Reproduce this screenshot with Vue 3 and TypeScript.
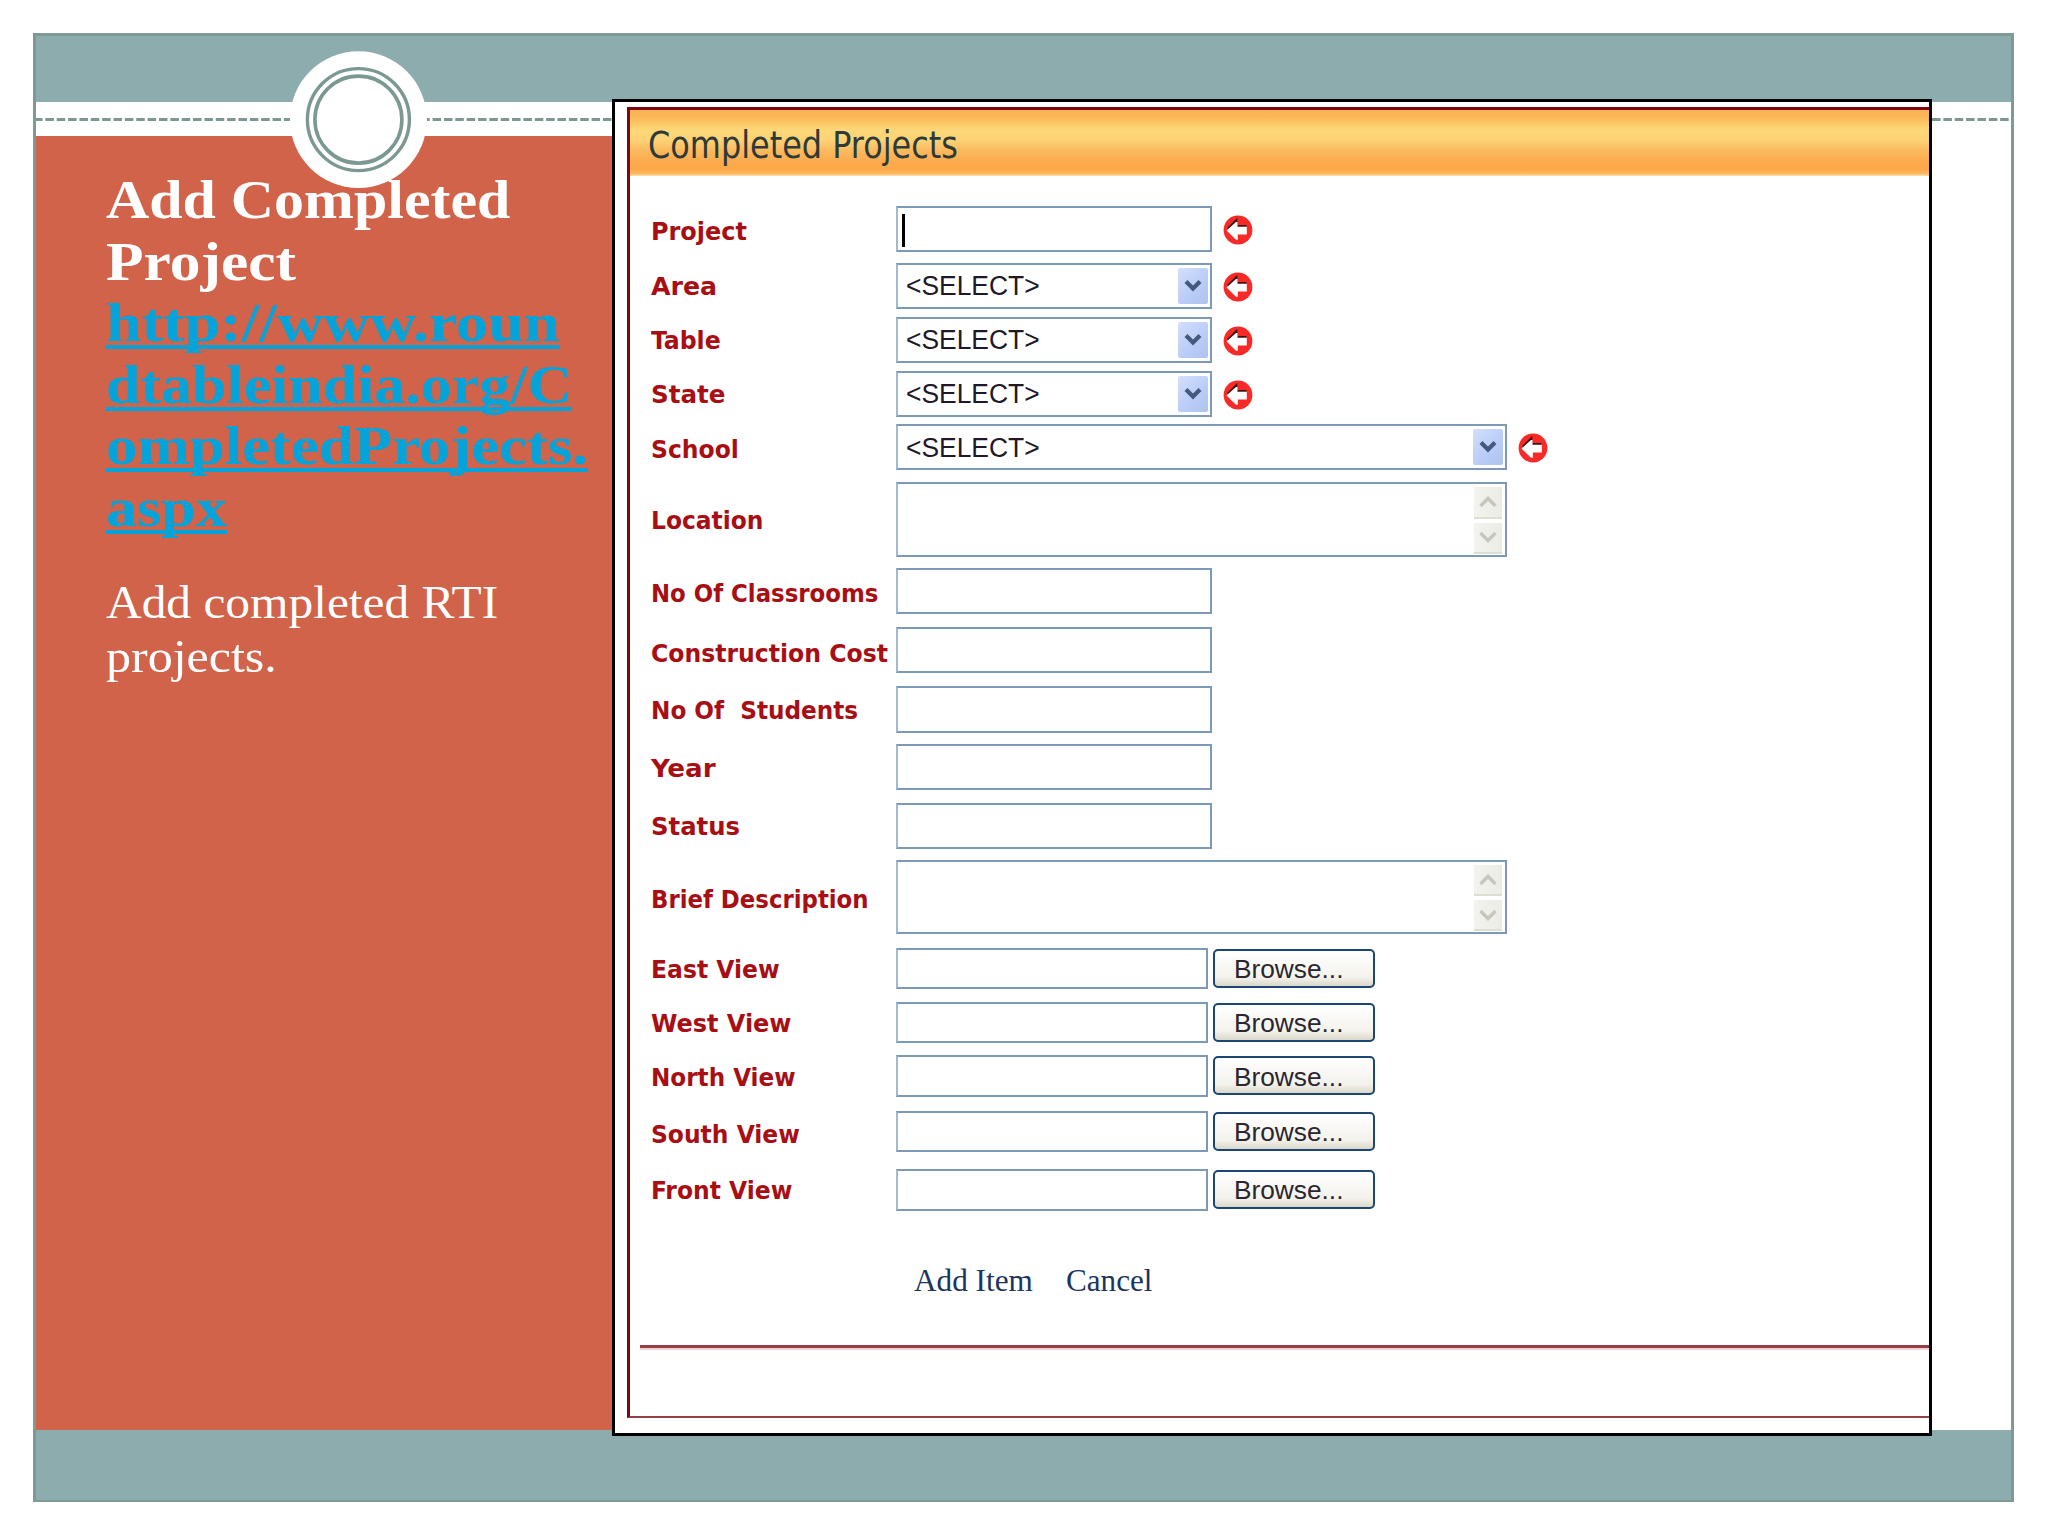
<script setup lang="ts">
import type { Directive } from 'vue'

type Kind = 'text' | 'select' | 'area' | 'file'

interface Field {
  label: string
  kind: Kind
  /** top edge and height of the control, in slide pixels */
  top: number
  height: number
  /** text baselines of the label and of the control's own text */
  base: number
  textBase?: number
  labelWidth: number
  wide?: boolean
  required?: boolean
  focused?: boolean
}

const FIRST_TOP = 176

const fields: Field[] = [
  { label: 'Project', kind: 'text', top: 206, height: 46, base: 241, labelWidth: 96, required: true, focused: true },
  { label: 'Area', kind: 'select', top: 263, height: 46, base: 296, textBase: 296, labelWidth: 66, required: true },
  { label: 'Table', kind: 'select', top: 317, height: 46, base: 350, textBase: 350, labelWidth: 70, required: true },
  { label: 'State', kind: 'select', top: 371, height: 46, base: 404, textBase: 404, labelWidth: 75, required: true },
  { label: 'School', kind: 'select', top: 424, height: 46, base: 459, textBase: 458, labelWidth: 88, wide: true, required: true },
  { label: 'Location', kind: 'area', top: 482, height: 75, base: 530, labelWidth: 112, wide: true },
  { label: 'No Of Classrooms', kind: 'text', top: 568, height: 46, base: 603, labelWidth: 227 },
  { label: 'Construction Cost', kind: 'text', top: 627, height: 46, base: 663, labelWidth: 237 },
  { label: 'No Of  Students', kind: 'text', top: 686, height: 47, base: 720, labelWidth: 207 },
  { label: 'Year', kind: 'text', top: 744, height: 46, base: 778, labelWidth: 65 },
  { label: 'Status', kind: 'text', top: 803, height: 46, base: 836, labelWidth: 89 },
  { label: 'Brief Description', kind: 'area', top: 860, height: 74, base: 909, labelWidth: 218, wide: true },
  { label: 'East View', kind: 'file', top: 948, height: 41, base: 979, textBase: 979, labelWidth: 129 },
  { label: 'West View', kind: 'file', top: 1002, height: 41, base: 1033, textBase: 1033, labelWidth: 141 },
  { label: 'North View', kind: 'file', top: 1055, height: 42, base: 1087, textBase: 1087, labelWidth: 145 },
  { label: 'South View', kind: 'file', top: 1111, height: 41, base: 1144, textBase: 1142, labelWidth: 149 },
  { label: 'Front View', kind: 'file', top: 1169, height: 42, base: 1200, textBase: 1200, labelWidth: 141 },
]

const gapBefore = (i: number): number =>
  i === 0 ? fields[0].top - FIRST_TOP : fields[i].top - fields[i - 1].top - fields[i - 1].height

/** Stretches a line of text horizontally to the given width. */
const vFit: Directive<HTMLElement, number> = {
  mounted(el, { value }) {
    el.style.transform = `scaleX(${value / el.offsetWidth})`
  },
}

const linkLines: [string, number][] = [
  ['http://www.roun', 454],
  ['dtableindia.org/C', 466],
  ['ompletedProjects.', 482],
  ['aspx', 121],
]
</script>

<template>
  <main class="slide">
    <div class="bar bar-top"></div>
    <div class="band"><i class="dashes left"></i><i class="dashes right"></i></div>
    <div class="content">
      <aside class="sidebar">
        <h1>
          <span class="line"><span v-fit="404" class="fit">Add Completed</span></span>
          <span class="line"><span v-fit="190" class="fit">Project</span></span>
          <a class="link">
            <span v-for="[t, w] in linkLines" :key="t" class="line"><span v-fit="w" class="fit">{{ t }}</span></span>
          </a>
        </h1>
        <p>
          <span class="line"><span v-fit="392" class="fit">Add completed RTI</span></span>
          <span class="line"><span v-fit="171" class="fit">projects.</span></span>
        </p>
      </aside>
    </div>
    <div class="bar bar-bottom"></div>

    <svg class="medallion" width="138" height="138" viewBox="0 0 138 138">
      <circle cx="69.4" cy="68.6" r="68.4" fill="#fff" />
      <circle cx="69.4" cy="68.6" r="51" fill="none" stroke="#7b9892" stroke-width="3.4" />
      <circle cx="69.4" cy="68.6" r="43.5" fill="none" stroke="#7b9892" stroke-width="3.6" />
    </svg>

    <section class="shot">
      <div class="page">
        <header><span v-fit="310" class="fit">Completed Projects</span></header>
        <form>
          <div
            v-for="(f, i) in fields"
            :key="f.label"
            class="row"
            :style="{ marginTop: gapBefore(i) + 'px', height: f.height + 'px' }"
          >
            <div class="label">
              <span v-fit="f.labelWidth" class="fit" :style="{ marginTop: f.base - f.top - 25 + 'px' }">{{ f.label }}</span>
            </div>
            <div class="control" :class="[f.kind, { wide: f.wide }]">
              <i v-if="f.focused" class="caret"></i>
              <template v-if="f.kind === 'select'">
                <span v-fit="134" class="fit value" :style="{ marginTop: (f.textBase ?? 0) - f.top - 27 + 'px' }">&lt;SELECT&gt;</span>
                <span class="drop">
                  <svg width="18" height="14" viewBox="0 0 18 14"><path d="M2 2.5 L9 9.5 L16 2.5" fill="none" stroke="#45597d" stroke-width="4.2" /></svg>
                </span>
              </template>
              <span v-if="f.kind === 'area'" class="scroller">
                <span><svg width="18" height="14" viewBox="0 0 18 14"><path d="M1.5 11 L9 3.5 L16.5 11" fill="none" stroke="#c6c6bf" stroke-width="3.4" /></svg></span>
                <span><svg width="18" height="14" viewBox="0 0 18 14"><path d="M1.5 3 L9 10.5 L16.5 3" fill="none" stroke="#c6c6bf" stroke-width="3.4" /></svg></span>
              </span>
            </div>
            <button v-if="f.kind === 'file'" type="button" class="browse">
              <span v-fit="109" class="fit" :style="{ marginTop: (f.textBase ?? 0) - f.top - 28 + 'px' }">Browse...</span>
            </button>
            <svg v-if="f.required" class="required" width="30" height="30" viewBox="0 0 30 30">
              <circle cx="15" cy="15" r="14.4" fill="#f82a27" />
              <path d="M5 14 L13 6 V11.2 H23.5" fill="none" stroke="#3a1512" stroke-width="2.6" />
              <path d="M3.5 15.5 L13 7 H14.5 V11.8 H23.8 V19.5 H14.8 V24.8 H13 Z" fill="#fff" />
            </svg>
          </div>
        </form>
        <nav>
          <a><span v-fit="119" class="fit">Add Item</span></a>
          <a><span v-fit="86" class="fit">Cancel</span></a>
        </nav>
        <div class="rule"></div>
      </div>
    </section>
  </main>
</template>

<style>
body {
  background: #fff;
}
</style>

<style scoped>
.slide {
  position: relative;
  box-sizing: border-box;
  width: 1981px;
  height: 1469px;
  margin: 33px 0 0 33px;
  border: 3px solid #7e9a95;
  border-bottom-width: 2px;
  background: #fff;
  display: flex;
  flex-direction: column;
}
.bar {
  background: #8cacae;
}
.bar-top {
  height: 66px;
}
.bar-bottom {
  height: 70px;
}
.band {
  height: 34px;
  display: flex;
  align-items: center;
}
.dashes {
  height: 3px;
  background: linear-gradient(90deg, #7b9892 0 8.2px, transparent 8.2px) 0 0 / 11.374px 3px repeat-x;
}
.dashes.left {
  width: 254px;
  background-position-x: -2px;
}
.dashes.right {
  margin-left: 137px;
  flex: 1;
  background-position-x: -5.8px;
}
.content {
  flex: 1;
  display: flex;
}
.sidebar {
  width: 577px;
  box-sizing: border-box;
  padding: 33px 0 0 70px;
  background: #d06349;
  color: #fff;
  font-family: "Liberation Serif", serif;
}
.fit {
  display: inline-block;
  white-space: pre;
  transform-origin: 0 50%;
}
.line {
  display: block;
}
h1 {
  margin: 0;
  font-size: 55px;
  line-height: 61.6px;
  font-weight: bold;
}
h1 .line {
  height: 61.6px;
}
.link {
  color: #04a3da;
}
.link .fit {
  text-decoration: underline;
  text-decoration-thickness: 3.5px;
  text-underline-offset: 4px;
  text-decoration-skip-ink: none;
}
p {
  margin: 37px 0 0;
  font-size: 46.5px;
  line-height: 54.7px;
}
p .line {
  height: 54.7px;
}
.medallion {
  position: absolute;
  left: 253px;
  top: 15px;
}
.shot {
  position: absolute;
  left: 576px;
  top: 63px;
  width: 1320px;
  height: 1337px;
  box-sizing: border-box;
  border: 3px solid #000;
  background: #fff;
  padding: 5px 0 0 12px;
}
.page {
  box-sizing: border-box;
  height: 1311px;
  border: solid #7d070c;
  border-width: 3px 0 0 3px;
  border-bottom: 2.5px solid #934048;
}
header {
  height: 66px;
  padding-left: 18px;
  background: linear-gradient(#f9b255 0, #fcb958 12%, #fdd878 30%, #fdd376 45%, #fbb95e 62%, #fca94c 80%, #fda949 90%, #fdbc63 97%, #fee3ba 100%);
  font: 36.5px/71px "DejaVu Sans Condensed", "DejaVu Sans", sans-serif;
  font-stretch: condensed;
  color: #2e3a38;
}
form {
  height: 1035px;
  padding-left: 21px;
}
form::before {
  content: "";
  display: table;
}
.row {
  display: flex;
  align-items: flex-start;
}
.label {
  width: 245px;
  flex: none;
  font: bold 25.5px/30px "DejaVu Sans Condensed", "DejaVu Sans", sans-serif;
  font-stretch: condensed;
  color: #a80f14;
}
.label .fit {
  display: block;
  width: max-content;
}
.control {
  box-sizing: border-box;
  flex: none;
  width: 316px;
  height: 100%;
  border: 2.5px solid #7c9ab8;
  border-left-color: #a3b9cc;
  display: flex;
  align-items: flex-start;
  background: #fff;
}
.control.wide {
  width: 611px;
}
.control.file {
  width: 312px;
}
.caret {
  width: 3px;
  height: 33px;
  margin: 6px 0 0 4px;
  background: #000;
}
.value {
  margin-left: 8px;
  font: 27px/30px "Liberation Sans", Arial, sans-serif;
  color: #201828;
}
.drop {
  margin: 3px 2px 0 auto;
  width: 30px;
  height: 36px;
  display: flex;
  align-items: center;
  justify-content: center;
  border-radius: 2px;
  background: linear-gradient(135deg, #d3dffb, #b9ccf8 60%, #b0c3ee);
}
.scroller {
  margin: 3px 3px 0 auto;
  width: 28px;
  height: calc(100% - 4px);
  display: flex;
  flex-direction: column;
  gap: 4px;
}
.scroller span {
  flex: 1;
  display: flex;
  align-items: center;
  justify-content: center;
  background: linear-gradient(90deg, #f3f3ef, #ecece5);
  border-bottom: 2px solid #deded2;
}
.browse {
  box-sizing: border-box;
  width: 162px;
  height: 39px;
  margin: 1px 0 0 5px;
  padding: 0 0 0 19px;
  border: 2.5px solid #1c4674;
  border-radius: 5px;
  background: linear-gradient(#fff, #f3f2ec 75%, #dcd7ca);
  font: 26.5px/30px "Liberation Sans", Arial, sans-serif;
  color: #2b2530;
  display: flex;
  align-items: flex-start;
}
.required {
  margin: 9px 0 0 11px;
}
nav {
  height: 134px;
  display: flex;
  padding-left: 284px;
  box-sizing: border-box;
  padding-top: 51px;
  font: 31.5px/38px "Liberation Serif", serif;
  color: #1b3560;
}
nav a {
  width: 152px;
}
.rule {
  margin-left: 10px;
  height: 2.5px;
  background: #934048;
  box-shadow: 0 2px 0 #f0d3d6;
}
</style>
